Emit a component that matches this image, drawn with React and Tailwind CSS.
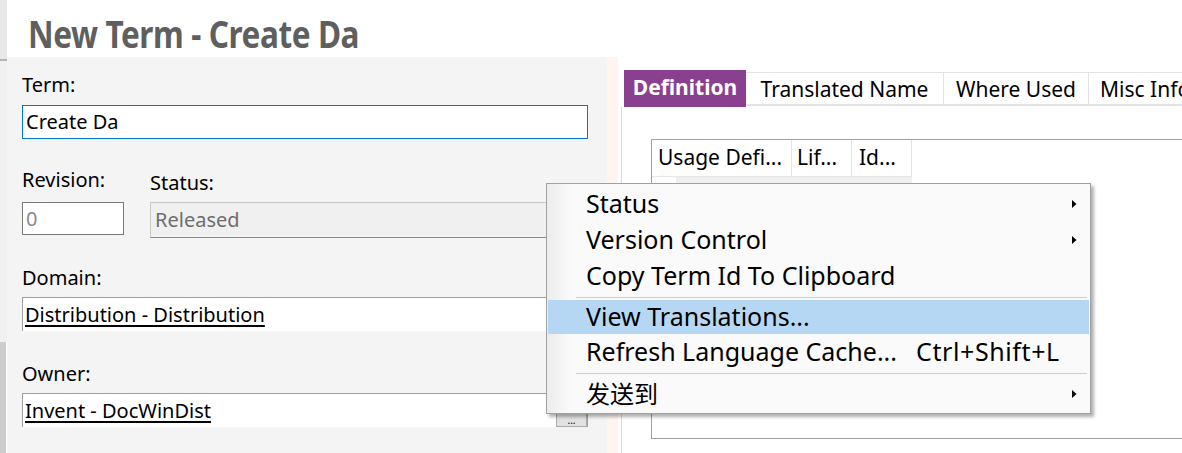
import React from 'react';

const ui = { fontFamily: '"Noto Sans", "Open Sans", "Noto Sans CJK SC", sans-serif' };

const Arrow = () => (
  <svg width="5" height="8" viewBox="0 0 5 8" className="shrink-0">
    <path d="M0 0 L4.5 4 L0 8 Z" fill="#000" />
  </svg>
);

const MenuItem = ({ label, shortcut, sub, active, cjk }) => (
  <div
    className={`flex items-center pl-[38px] pr-[12px] mx-[1px] ${active ? 'bg-[#b6d7f3] h-[34px]' : 'h-[36px]'}`}
  >
    <span className={`${cjk ? 'text-[24px]' : 'text-[25px]'} text-black whitespace-nowrap ${shortcut ? 'w-[330px]' : ''}`}>
      {label}
    </span>
    {shortcut && <span className="text-[25px] text-black whitespace-nowrap tracking-[0.6px]">{shortcut}</span>}
    <span className="flex-1" />
    {sub && <Arrow />}
  </div>
);

const Separator = () => (
  <div className="h-[6px] flex items-center pl-[29px] pr-[3px]">
    <div className="h-px w-full bg-[#cfcfcf]" />
  </div>
);

const Label = ({ children, className = '' }) => (
  <div className={`text-[20px] leading-[26px] text-black ${className}`}>{children}</div>
);

export default function App() {
  return (
    <div className="w-[1182px] h-[453px] overflow-hidden bg-white flex relative" style={ui}>
      {/* left edge strip */}
      <div className="w-[7px] flex flex-col shrink-0">
        <div className="h-[59px] bg-[#e8e8e8]" />
        <div className="h-[2px] bg-[#b4b4b4]" />
        <div className="h-[281px] bg-[#f0f0f0]" />
        <div className="flex-1 bg-[#cdcdcd] mr-[1px]" />
      </div>

      <div className="flex-1 flex flex-col">
        {/* header */}
        <div className="h-[57px] flex items-center pl-[21px] pt-[9px]">
          <h1 className="text-[38px] font-bold text-[#5f5f5f] leading-none whitespace-nowrap scale-x-[0.83] origin-left tracking-[-0.5px]">
            New Term - Create Da
          </h1>
        </div>

        <div className="flex-1 flex">
          {/* left form panel */}
          <div className="w-[600px] bg-[#f4f4f4] pl-[15px] pt-[15px] flex flex-col">
            <Label>Term:</Label>
            <div className="mt-[7px] w-[566px] h-[34px] bg-white border border-[#0078d7] flex items-center pl-[3px] text-[20px]">
              Create Da
            </div>

            <div className="flex mt-[28px]">
              <div className="w-[128px]">
                <Label>Revision:</Label>
                <div className="mt-[9px] w-[102px] h-[33px] bg-white border border-[#7a7a7a] flex items-center pl-[3px] text-[20px] text-[#8a8a8a]">
                  0
                </div>
              </div>
              <div className="flex-1">
                <Label className="mt-[3px]">Status:</Label>
                <div className="mt-[6px] w-[437px] h-[36px] border border-[#c8c8c8] border-b-[#8c8c8c] bg-[#f0f0f0] flex items-center pl-[4px] text-[20px] text-[#6d6d6d]">
                  Released
                </div>
              </div>
            </div>

            <Label className="mt-[27px]">Domain:</Label>
            <div className="mt-[6px] w-[566px] h-[34px] bg-white border-l border-t border-[#a0a0a0] flex items-center pl-[2px] text-[20px]">
              <span className="underline underline-offset-[3px]">Distribution - Distribution</span>
            </div>

            <Label className="mt-[30px]">Owner:</Label>
            <div className="mt-[6px] w-[566px] h-[34px] bg-white border-l border-t border-r border-[#a0a0a0] flex items-center pl-[2px] text-[20px] relative">
              <span className="underline underline-offset-[3px]">Invent - DocWinDist</span>
              <div className="absolute right-0 bottom-0 w-[31px] h-[24px] bg-[#e1e1e1] border border-[#adadad] flex items-end justify-center text-[10px] leading-[10px] pb-[1px]">
                ...
              </div>
            </div>
          </div>

          {/* splitter */}
          <div className="w-[11px] bg-[#fff4ef]" />

          {/* right tab area */}
          <div className="flex-1 pt-[11px] pl-[6px] flex flex-col">
            <div className="flex items-end h-[39px]">
              <div className="h-[37px] w-[122px] bg-[#8a3f8f] text-white font-bold text-[21px] flex items-center justify-center pb-[2px]">
                Definition
              </div>
              <div className="h-[33px] w-[198px] border border-[#e3e3e3] border-l-0 flex items-center justify-center text-[21px] mb-[2px] pt-[3px]">
                Translated Name
              </div>
              <div className="h-[33px] w-[145px] border border-[#e3e3e3] border-l-0 flex items-center justify-center text-[21px] mb-[2px] pt-[3px]">
                Where Used
              </div>
              <div className="h-[33px] flex-1 border border-[#e3e3e3] border-l-0 border-r-0 flex items-center pl-[11px] text-[21px] whitespace-nowrap overflow-hidden mb-[2px] pt-[3px]">
                Misc Info
              </div>
            </div>
            <div className="flex-1 border-l border-[#dadada] ml-[-3px] relative pl-[29px] pt-[32px] flex">
              <div className="absolute top-[-2px] left-[125px] right-0 h-px bg-[#e3e3e3]" />
              <div className="flex-1 h-[300px] border border-[#a0a0a0] border-r-0 flex flex-col">
                <div className="flex h-[37px] text-[21px]">
                  <div className="w-[140px] border-r border-b border-[#e5e5e5] flex items-center pl-[6px] whitespace-nowrap">Usage Defi...</div>
                  <div className="w-[60px] border-r border-b border-[#e5e5e5] flex items-center pl-[5px]">Lif...</div>
                  <div className="w-[60px] border-r border-b border-[#e5e5e5] flex items-center pl-[7px]">Id...</div>
                </div>
                <div className="ml-[24px] w-[236px] h-[6px] bg-[#f0f0f0]" />
              </div>
            </div>
          </div>
        </div>
      </div>

      {/* context menu */}
      <div className="absolute left-[546px] top-[183px] w-[545px] h-[231px] bg-[#fafafa] border border-[#a0a0a0] shadow-[3px_3px_3px_rgba(0,0,0,0.3)] pt-[2px]">
        <div className="absolute left-0 top-0 bottom-0 w-[24px] bg-gradient-to-r from-[#ececec] to-[#fafafa]" />
        <div className="relative flex flex-col">
          <MenuItem label="Status" sub />
          <MenuItem label="Version Control" sub />
          <MenuItem label="Copy Term Id To Clipboard" />
          <Separator />
          <MenuItem label="View Translations..." active />
          <MenuItem label="Refresh Language Cache..." shortcut="Ctrl+Shift+L" />
          <Separator />
          <MenuItem label="发送到" sub cjk />
        </div>
      </div>
    </div>
  );
}
